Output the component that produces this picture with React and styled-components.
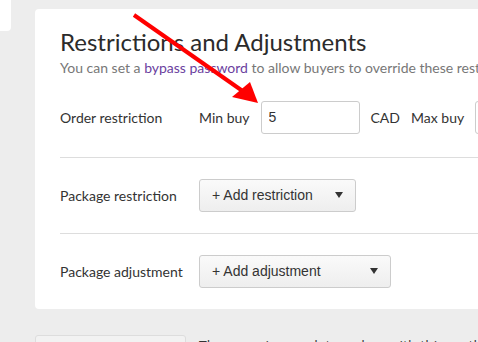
import styled, { createGlobalStyle } from "styled-components";

const GlobalStyle = createGlobalStyle`
  body {
    margin: 0;
    background: #ededed;
    overflow: hidden;
  }
`;

const Page = styled.div`
  position: relative;
  height: 342px;
  overflow: hidden;
  display: grid;
  grid-template-columns: 35px 1fr;
  font-family: Lato, "Liberation Sans", sans-serif;
  color: #333;
`;

const SideColumn = styled.div`
  display: flex;
  flex-direction: column;
`;

const SideNub = styled.div`
  width: 11px;
  height: 31px;
  background: #fff;
  border-bottom-right-radius: 4px;
`;

const Main = styled.div`
  padding-top: 9px;
  min-width: 620px;
`;

const Card = styled.section`
  background: #fff;
  border-radius: 4px 0 0 4px;
  padding: 19px 0 0 25px;
`;

const Title = styled.h2`
  margin: 0;
  font-size: 24px;
  font-weight: 400;
  line-height: 28.8px;
  color: #2b2b2b;
`;

const Subtitle = styled.p`
  margin: 2px 0 0;
  font-size: 14px;
  line-height: 17px;
  color: #777;
  white-space: nowrap;
`;

const Link = styled.a`
  color: #6b3fa0;
  text-decoration: none;
`;

const Row = styled.div`
  display: flex;
  align-items: center;
  padding: ${(p) => p.$top}px 0 ${(p) => p.$bottom}px;
  border-top: ${(p) => (p.$first ? "none" : "1px solid #ddd")};
`;

const Label = styled.div`
  width: 139px;
  flex-shrink: 0;
  font-size: 14px;
`;

const Controls = styled.div`
  display: flex;
  align-items: center;
  gap: 11px;
  font-size: 14px;
  white-space: nowrap;
`;

const Input = styled.input`
  box-sizing: border-box;
  width: 99px;
  height: 33px;
  border: 1px solid #ccc;
  border-radius: 3px;
  padding: 0 7px;
  font-family: "Liberation Sans", Arial, sans-serif;
  font-size: 14px;
  color: #333;
`;

const Dropdown = styled.button`
  box-sizing: border-box;
  width: ${(p) => p.$width}px;
  height: 33px;
  display: flex;
  align-items: center;
  justify-content: space-between;
  padding: 0 12px;
  border: 1px solid #ccc;
  border-radius: 3px;
  background: linear-gradient(#fafafa, #eeeeee);
  font-family: "Liberation Sans", Arial, sans-serif;
  font-size: 14px;
  color: #333;
`;

const Caret = styled.span`
  width: 0;
  height: 0;
  border-left: 4px solid transparent;
  border-right: 4px solid transparent;
  border-top: 6px solid #333;
`;

const Footer = styled.div`
  display: flex;
  align-items: flex-start;
  gap: 13px;
  margin-top: 26px;
`;

const GhostBox = styled.div`
  width: 149px;
  height: 40px;
  background: #f2f2f2;
  border: 1px solid #ddd;
  border-radius: 3px;
`;

const Notice = styled.div`
  padding-top: 1px;
  font-family: "Open Sans", sans-serif;
  font-size: 14px;
  color: #333;
  white-space: nowrap;
`;

const Arrow = styled.svg`
  position: absolute;
  left: 0;
  top: 0;
  pointer-events: none;
`;

function App() {
  return (
    <>
      <GlobalStyle />
      <Page>
        <SideColumn>
          <SideNub />
        </SideColumn>
        <Main>
          <Card>
            <Title>Restrictions and Adjustments</Title>
            <Subtitle>
              You can set a <Link href="#">bypass password</Link> to allow
              buyers to override these restrictions.
            </Subtitle>
            <Row $first $top={25} $bottom={23}>
              <Label>Order restriction</Label>
              <Controls>
                <span>Min buy</span>
                <Input defaultValue="5" />
                <span>CAD</span>
                <span>Max buy</span>
                <Input />
              </Controls>
            </Row>
            <Row $top={21} $bottom={21}>
              <Label>Package restriction</Label>
              <Dropdown $width={157}>
                + Add restriction
                <Caret />
              </Dropdown>
            </Row>
            <Row $top={21} $bottom={21}>
              <Label>Package adjustment</Label>
              <Dropdown $width={192}>
                + Add adjustment
                <Caret />
              </Dropdown>
            </Row>
          </Card>
          <Footer>
            <GhostBox />
            <Notice>There are incomplete orders with this method.</Notice>
          </Footer>
        </Main>
        <Arrow width="478" height="342">
          <line x1="134" y1="15" x2="244" y2="92" stroke="#f00" strokeWidth="4" />
          <polygon points="258,103 232,97 250,82" fill="#f00" />
        </Arrow>
      </Page>
    </>
  );
}

export default App;
